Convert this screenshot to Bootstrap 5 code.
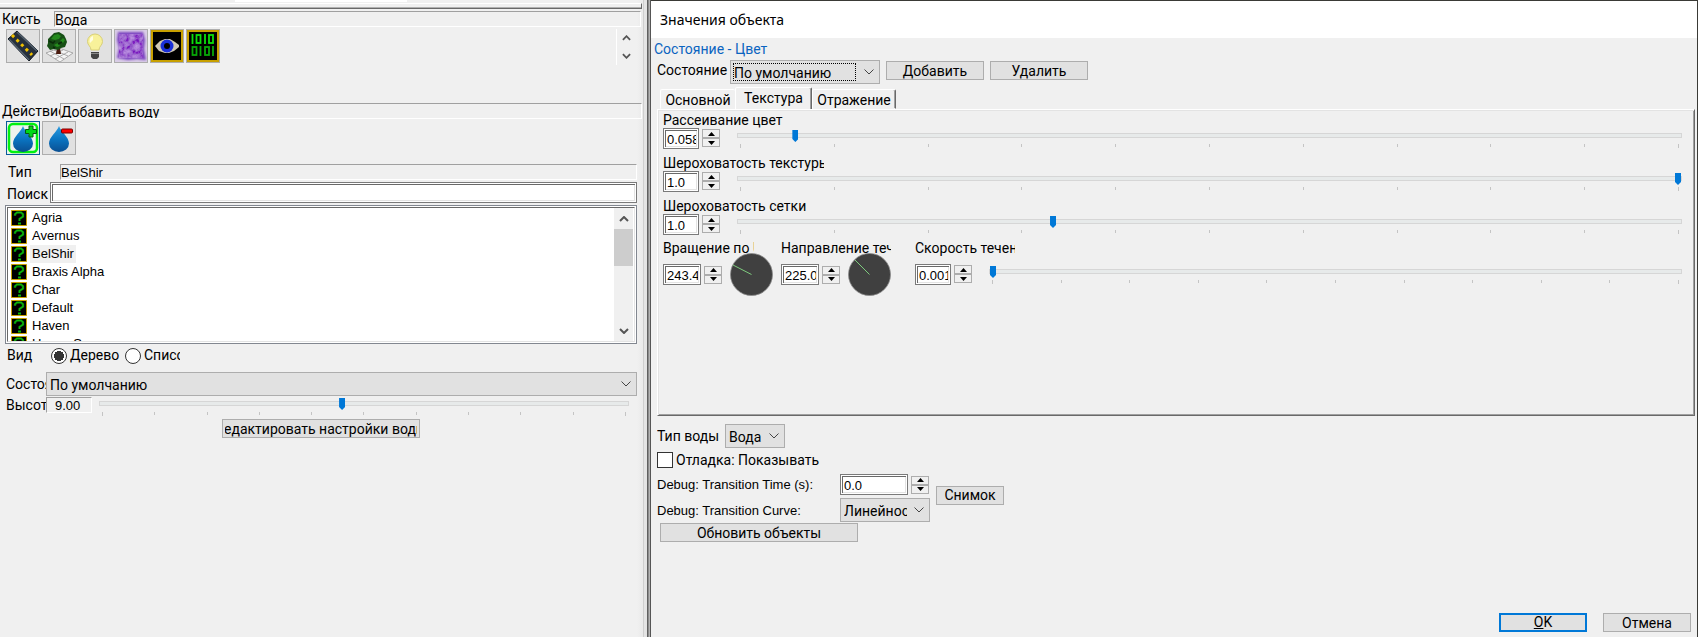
<!DOCTYPE html>
<html lang="ru">
<head>
<meta charset="utf-8">
<meta name="viewport" content="width=device-width, initial-scale=1">
<title>Значения объекта</title>
<link href="https://cdn.jsdelivr.net/npm/bootstrap@5.3.0/dist/css/bootstrap.min.css" rel="stylesheet">
<style>
:root{--face:#f0f0f0;--edge:#adadad;--btn:#e1e1e1;--blue:#0078d7}
body{background:var(--face);color:#000;font:14px/17px Roboto,"Liberation Sans",sans-serif;overflow-x:hidden}
.latin{font-family:"Liberation Sans",Arial,sans-serif;font-size:13px}
.app{display:grid;grid-template-columns:651fr 1047fr}
.dock{padding-right:1px;background:linear-gradient(to left,#555 0 1px,#b4b4b4 1px 2px,#8c8c8c 2px 3px,#606060 3px 4px,#e4e4e4 4px 7px,#cfcfcf 7px 8px,#ebebeb 8px 9px,var(--face) 14px)}
.strip{height:9px;padding-top:3px;margin-right:8px;background:linear-gradient(#fff,#fff) 235px 0/172px 2px no-repeat}
.strip div{height:6px;border:solid;border-width:1px 1px 1px 0;border-color:#fff #696969 #696969;background:linear-gradient(#f0f0f0 0 3px,#b0b0b0 3px)}
.brush-row{margin:2px 9px 0 0}
.clip{overflow:hidden;white-space:nowrap;flex:none}
.sunk{height:16px;line-height:16px;border:1px solid;border-color:#a0a0a0 #fff #fff #a0a0a0;overflow:hidden;white-space:nowrap}
.w-brush,.w-action,.w-type{height:16px}
.w-brush{width:54px;padding-left:2px}.w-action{width:60px;padding-left:2px}
.w-type{width:60px;padding-left:8px}.w-find{width:50px;height:21px;padding:4px 0 0 7px}.w-cut{width:46px;padding-left:6px}
.tile{width:34px;height:34px;padding:0;border:1px solid var(--edge);background:var(--btn);display:block}
.tile svg{display:block;width:32px;height:32px}
.tile.on{border-color:#0a5a9c;background:#e8f6e8}
.tiles{gap:2px}
.palette{height:76px;padding:2px 9px 0 6px}
.actions{padding:2px 0 9px 6px}
.pager{width:25px;height:36px;padding-right:5px;border-left:1px solid #fff}
.bare{border:0;padding:0;background:none;display:flex;align-items:center;justify-content:center}
.field{min-width:0;height:21px;padding:3px 2px 1px 3px;border:1px solid #7a7a7a;border-radius:0;background:#fff;color:#000;box-shadow:inset 0 0 0 1px #fff,inset 2px 2px #696969,inset -2px -2px #e3e3e3;line-height:17px;outline:0;flex:none}
.num{width:36px}.num-m{width:38px}.num-l{width:68px}
.spin{width:18px;margin-left:3px}
.spin button{height:9px;width:18px;border:1px solid var(--edge);background:#f0f0f0}
.spin svg{width:7px;height:4px}
.listing{height:139px;margin:2px 0 0 5px;border:1px solid #828790;padding:1px;background:#fff}
.listing>div{border:1px solid;border-color:#696969 #e3e3e3 #e3e3e3 #696969;height:135px}
.rows{padding:1px 0 0 3px;overflow:hidden}
.rows li{height:18px;display:flex;align-items:center}
.rows svg{width:16px;height:16px;margin-right:3px;flex:none}
.rows span{padding:0 2px;line-height:18px}
.rows .sel{background:#f0f0f0}
.vbar{width:20px;background:linear-gradient(to left,#fff 1px,#f0f0f0 1px);padding-right:1px}
.vbar button{height:21px;width:19px}
.vbar i{height:37px;background:#cdcdcd}
.drop{height:24px;border:1px solid var(--edge);border-radius:0;color:#000;font:inherit;appearance:none;padding:2px 22px 0 3px;min-width:0;
background:var(--btn) url("data:image/svg+xml,%3Csvg xmlns='http://www.w3.org/2000/svg' width='10' height='6'%3E%3Cpath d='M.5.5 5 5 9.500 .5' fill='none' stroke='%23444'/%3E%3C/svg%3E") right 5px center no-repeat;outline:0}
.push{height:19px;line-height:15px;border:1px solid var(--edge);background:var(--btn);color:#000;padding:1px 2px 0;display:flex;justify-content:center;align-items:center;overflow:hidden;white-space:nowrap;flex:none}
.push span{flex:none}
.w98{width:98px}.w88{width:88px}.w198{width:198px}.w68{width:68px}
.hold{overflow:hidden;display:flex;justify-content:center;width:100%}
input[type=range]{appearance:none;display:block;width:100%;height:13px;margin:0;background:none}
input[type=range]::-webkit-slider-runnable-track{height:5px;border:1px solid #d6d6d6;background:#e7eaea}
input[type=range]::-webkit-slider-thumb{appearance:none;width:6px;height:12px;margin-top:-4px;background:var(--blue);clip-path:polygon(0 0,100% 0,100% 75%,50% 100%,0 75%)}
.ticks{padding:0 3px;margin-top:2px;height:4px;display:flex;justify-content:space-between}
.ticks i{width:1px;height:3px;background:#c4c4c4}
.ticks i:first-child,.ticks i:last-child{height:4px}
.slide{padding-top:1px;margin-left:17px}
.pick{appearance:none;width:16px;height:16px;border:1px solid #333;background:#fff;margin:0;flex:none}
.pick[type=radio]{border-radius:50%}
.pick[type=radio]:checked{background:radial-gradient(circle,#333 0 5px,#fff 5px)}
.pick+label{padding-left:3px}
.view-row{height:23px;padding-left:7px}
.value{width:46px;padding-left:8px}
.height-slide{margin:0 8px 0 7px}
.dialog{border:solid #3a3a36;border-width:1px 1px 0 0}
.caption{height:37px;background:#fff;font:14px/38px "Noto Sans","Open Sans",sans-serif;padding-left:9px;margin:0}
.group-name{color:#0a64c0;font-size:14px;font-weight:400;line-height:22px;height:22px;margin:0;padding-left:3px}
.state-row{padding-left:6px}
.state-row label{width:73px;padding-top:2px}
.state-row .push{margin-top:1px}
.tabs{margin-top:3px;padding-left:9px;height:22px;align-items:flex-end}
.tabs button{height:20px;border:1px solid;border-color:#fff #696969 transparent #fff;background:var(--face);padding:0;border-radius:2px 2px 0 0;line-height:20px;box-shadow:inset -1px 0 #a0a0a0}
.tabs .first{width:75px;border-right:0;box-shadow:none}.tabs .now{width:77px;height:23px;margin-bottom:-1px;line-height:19px}.tabs .last{width:84px}
.body-pad{padding-left:6px}
.sheet{min-height:307px;gap:7px;margin-right:2px;padding:3px 12px 0 5px;border:1px solid;border-color:#fff #696969 #696969 #fff;box-shadow:inset 1px 1px #e3e3e3,inset -1px -1px #a0a0a0}
.name{height:15px;line-height:15px;width:161px;overflow-x:clip;white-space:nowrap;display:block}
.spin-top{margin-top:1px}
.dial{width:43px;height:43px;display:block;flex:none;position:relative;background:var(--face);margin-left:8px}
.short{height:11px;line-height:13px;overflow-x:clip;white-space:nowrap;display:block}
.w91{width:91px}.w110{width:110px}.w100{width:100px}
.g-turn{width:118px}.g-dir{width:134px}
.flow-row{padding-top:11px}
.lower{padding:8px 0 0 6px}
.w-debug{width:183px}
.ok{border:2px solid var(--blue);padding-top:0}
.focused{position:relative;width:150px;margin-right:6px;flex:none}
.focused::after{content:"";position:absolute;left:3px;top:3px;right:24px;bottom:3px;border:1px dotted #000;pointer-events:none}
</style>
</head>
<body>
<svg width="0" height="0" class="position-absolute" aria-hidden="true">
<defs>
<linearGradient id="water" x1="0" y1="0" x2="0" y2="1"><stop offset="0" stop-color="#2a9be0"/><stop offset=".5" stop-color="#0a75c2"/><stop offset="1" stop-color="#0a4f92"/></linearGradient>
<symbol id="q" viewBox="0 0 16 16"><path d="M.5.5h15v15H.5z" fill="#000" stroke="#c8a000"/><path d="M4 6V4.500L6 2.500h4l2 2v2L8.500 9v2M7 13.500h3" fill="none" stroke="#054d05" stroke-width="2.500"/><path d="M4 5.500V4l2-1.500h4L12 4v2.500L8.500 9v2M7 13.500h3" fill="none" stroke="#0cb80c" stroke-width="1.500"/></symbol>
<symbol id="waterdrop" viewBox="0 0 32 32"><path d="M16 4c2 6 10 11 10 17.500a10 8.500 0 0 1-20 0C6 15 14 10 16 4z" fill="url(#water)"/></symbol>
<symbol id="up" viewBox="0 0 10 6"><path d="M1 5 5 1l4 4" fill="none" stroke="#555" stroke-width="2"/></symbol>
<symbol id="down" viewBox="0 0 10 6"><path d="M1 1l4 4 4-4" fill="none" stroke="#555" stroke-width="2"/></symbol>
<symbol id="tu" viewBox="0 0 7 4"><path d="M0 4 3.500 0 7 4z"/></symbol>
<symbol id="td" viewBox="0 0 7 4"><path d="M0 0h7L3.500 4z"/></symbol>
</defs>
</svg>

<main class="app min-vh-100">
<section class="dock" aria-label="Кисть">
  <div class="strip"><div></div></div>
  <div class="d-flex brush-row">
    <div class="clip w-brush">Кисть</div><div class="sunk flex-fill">Вода</div>
  </div>
  <div class="palette d-flex justify-content-between">
    <div class="d-flex tiles">
      <button class="tile" aria-label="Дороги"><svg viewBox="0 0 32 32"><path d="M1 9 10 1l21 20-9 10z" fill="#26303c" stroke="#111820"/><path d="M2 9 22 30M10 2l20 19" stroke="#53606d" stroke-width="1.500"/><path d="M5 5l20 20" stroke="#f0c000" stroke-width="3" stroke-dasharray="3 3.500"/></svg></button>
      <button class="tile" aria-label="Объекты"><svg viewBox="0 0 32 32"><path d="M3 23 16 18l14 5-13 9zM7 21l14 8M11 20l14 6M7 26l13-6M12 29l13-7" fill="#f4f4f4" stroke="#999" stroke-width=".8"/><path d="M14 18h3l1 6h-5z" fill="#4b1c10"/><path d="M5 9l3-3 3-3 5-1 5 3 2 4 1 3-2 5-4 1-3 2-4-1-4 1-3-4 1-3z" fill="#174f15"/><path d="M8 9l3-4 4-1 3 2-2 3-4 1zM17 11l3-3 2 2-2 3zM11 15l4-2 2 3-3 1z" fill="#248a1c"/><path d="M6 11l4 2 2-2M15 14l4-2M10 17l2 1" stroke="#0a2c0a" fill="none" stroke-width="1.500"/></svg></button>
      <button class="tile" aria-label="Свет"><svg viewBox="0 0 32 32"><path d="M16 4a7.500 7.500 0 0 1 7.500 7.500c0 4-3.500 4.500-3.500 8.500h-8c0-4-3.500-4.500-3.500-8.500A7.500 7.500 0 0 1 16 4z" fill="#f8f19a" stroke="#d8cf78"/><path d="M14 6c-3 1-4 4-3 7l3-3z" fill="#fffde0"/><path d="M12 22h8v5l-2 2h-4l-2-2z" fill="#444"/><path d="M12 23.500h8" stroke="#888"/></svg></button>
      <button class="tile" aria-label="Туман"><svg viewBox="0 0 32 32"><defs><filter id="mist"><feTurbulence type="fractalNoise" baseFrequency=".2" numOctaves="4" seed="4"/><feColorMatrix values="1 0 0 0 -.05 1 0 0 0 -.3 .7 0 0 0 .35 0 0 0 0 1"/><feComposite in2="SourceGraphic" operator="in"/></filter><filter id="soft"><feGaussianBlur stdDeviation="1"/></filter></defs><path d="M0 0h32v32H0z" fill="#d9cde6"/><path d="M3 2h25l2 8-1 9 2 11-9-1-9 1-11-2 2-10-2-8z" fill="#7c44c0" filter="url(#soft)"/><path d="M4 4h24v24H4z" filter="url(#mist)" opacity=".6"/></svg></button>
      <button class="tile" aria-label="Обзор"><svg viewBox="0 0 32 32"><path d="M1 1h30v30H1z" stroke="#c8a000" stroke-width="2"/><path d="M4 16l5-5 5-2h5l5 3 4 3v2l-5 4-5 2h-4l-6-2z" fill="#d0c8b4"/><circle cx="16" cy="16" r="6.500" fill="#1a30d8"/><circle cx="16" cy="16" r="3" fill="#000"/></svg></button>
      <button class="tile" aria-label="Данные"><svg viewBox="0 0 32 32"><path d="M1 1h30v30H1z" stroke="#c8a000" stroke-width="2"/><g fill="none" stroke="#0be00b" stroke-width="1.800"><path d="M5.500 4v10M18 4v10"/><rect x="9.500" y="5" width="4" height="8"/><rect x="22" y="5" width="4" height="8"/></g><g fill="none" stroke="#07a807" stroke-width="1.800"><path d="M13.500 16v10M26 16v10"/><rect x="5.500" y="17" width="4" height="8"/><rect x="18" y="17" width="4" height="8"/></g></svg></button>
    </div>
    <div class="pager d-flex flex-column justify-content-around">
      <button class="bare" aria-label="Вверх"><svg width="9" height="6"><use href="#up"/></svg></button>
      <button class="bare" aria-label="Вниз"><svg width="9" height="6"><use href="#down"/></svg></button>
    </div>
  </div>
  <div class="d-flex me-2">
    <div class="clip w-action">Действие</div><div class="sunk flex-fill">Добавить воду</div>
  </div>
  <div class="d-flex tiles actions">
    <button class="tile on" aria-label="Добавить воду"><svg viewBox="0 0 32 32"><rect x="2" y="2" width="28" height="28" rx="4" fill="#eef3ee" stroke="#00f010" stroke-width="2.500"/><use href="#waterdrop"/><path d="M22 4h4v3.500h3.500v4H26V15h-4v-3.500h-3.500v-4H22z" fill="#00d818" stroke="#055a10"/></svg></button>
    <button class="tile" aria-label="Убрать воду"><svg viewBox="0 0 32 32"><use href="#waterdrop"/><rect x="18.500" y="7" width="11" height="4" rx="1" fill="#f00" stroke="#700"/></svg></button>
  </div>
  <div style="margin-right:13px">
    <div class="d-flex"><div class="clip w-type">Тип</div><div class="sunk latin flex-fill">BelShir</div></div>
    <div class="d-flex" style="margin-top:2px"><label class="clip w-find" for="find">Поиск</label><input id="find" class="field latin flex-fill"></div>
    <div class="listing"><div class="d-flex">
      <ul class="rows list-unstyled latin flex-fill mb-0">
        <li><svg><use href="#q"/></svg><span>Agria</span></li>
        <li><svg><use href="#q"/></svg><span>Avernus</span></li>
        <li><svg><use href="#q"/></svg><span class="sel">BelShir</span></li>
        <li><svg><use href="#q"/></svg><span>Braxis Alpha</span></li>
        <li><svg><use href="#q"/></svg><span>Char</span></li>
        <li><svg><use href="#q"/></svg><span>Default</span></li>
        <li><svg><use href="#q"/></svg><span>Haven</span></li>
        <li><svg><use href="#q"/></svg><span>Haven Sun</span></li>
      </ul>
      <div class="vbar d-flex flex-column">
        <button class="bare" aria-label="Прокрутить вверх"><svg width="10" height="6"><use href="#up"/></svg></button>
        <i></i>
        <button class="bare mt-auto" aria-label="Прокрутить вниз"><svg width="10" height="6"><use href="#down"/></svg></button>
      </div>
    </div></div>
    <div class="d-flex align-items-center view-row">
      <div class="clip" style="width:44px">Вид</div>
      <input class="pick" type="radio" name="view" id="tree" checked><label class="clip" for="tree" style="width:58px">Дерево</label>
      <input class="pick" type="radio" name="view" id="flat"><label class="clip" for="flat" style="width:39px">Список</label>
    </div>
    <div class="d-flex align-items-center" style="margin-top:5px"><label class="clip w-cut" for="st">Состояние</label><select id="st" class="drop flex-fill"><option>По умолчанию</option></select></div>
    <div class="d-flex" style="padding-top:1px">
      <label class="clip w-cut" for="hgt">Высота</label><div class="sunk value latin">9.00</div>
      <div class="flex-fill height-slide"><input type="range" id="hgt" min="0" max="1000" value="458"><div class="ticks"><i></i><i></i><i></i><i></i><i></i><i></i><i></i><i></i><i></i><i></i><i></i></div></div>
    </div>
    <div class="d-flex justify-content-center" style="padding:3px 0 0 5px"><button class="push w198"><span class="hold"><span>Редактировать настройки воды</span></span></button></div>
  </div>
</section>

<section class="dialog d-flex flex-column" aria-label="Значения объекта">
  <h1 class="caption">Значения объекта</h1>
  <h2 class="group-name">Состояние - Цвет</h2>
  <div class="d-flex align-items-start state-row">
    <label for="state" class="clip">Состояние</label>
    <div class="focused"><select id="state" class="drop w-100"><option>По умолчанию</option></select></div>
    <button class="push w98" style="margin-right:6px">Добавить</button>
    <button class="push w98">Удалить</button>
  </div>
  <div class="tabs d-flex" role="tablist">
    <button class="first" role="tab">Основной</button><button class="now" role="tab" aria-selected="true">Текстура</button><button class="last" role="tab">Отражение</button>
  </div>
  <div class="body-pad">
  <div class="sheet d-flex flex-column">
    <div>
      <label class="name" for="diff">Рассеивание цвет</label>
      <div class="d-flex align-items-start">
        <input class="field num latin" id="diff" value="0.058">
        <div class="spin spin-top"><button class="bare" aria-label="Больше"><svg><use href="#tu"/></svg></button><button class="bare" aria-label="Меньше"><svg><use href="#td"/></svg></button></div>
        <div class="slide flex-fill"><input type="range" min="0" max="1000" value="58" aria-label="Рассеивание цвет"><div class="ticks"><i></i><i></i><i></i><i></i><i></i><i></i><i></i><i></i><i></i><i></i><i></i></div></div>
      </div>
    </div>
    <div>
      <label class="name" for="rtex">Шероховатость текстуры</label>
      <div class="d-flex align-items-start">
        <input class="field num latin" id="rtex" value="1.0">
        <div class="spin spin-top"><button class="bare" aria-label="Больше"><svg><use href="#tu"/></svg></button><button class="bare" aria-label="Меньше"><svg><use href="#td"/></svg></button></div>
        <div class="slide flex-fill"><input type="range" min="0" max="1000" value="1000" aria-label="Шероховатость текстуры"><div class="ticks"><i></i><i></i><i></i><i></i><i></i><i></i><i></i><i></i><i></i><i></i><i></i></div></div>
      </div>
    </div>
    <div>
      <label class="name" for="rmesh">Шероховатость сетки</label>
      <div class="d-flex align-items-start">
        <input class="field num latin" id="rmesh" value="1.0">
        <div class="spin spin-top"><button class="bare" aria-label="Больше"><svg><use href="#tu"/></svg></button><button class="bare" aria-label="Меньше"><svg><use href="#td"/></svg></button></div>
        <div class="slide flex-fill"><input type="range" min="0" max="1000" value="333" aria-label="Шероховатость сетки"><div class="ticks"><i></i><i></i><i></i><i></i><i></i><i></i><i></i><i></i><i></i><i></i><i></i></div></div>
      </div>
    </div>
    <div class="d-flex">
      <div class="g-turn flex-shrink-0">
        <label class="short w91" for="turn">Вращение по UV</label>
        <div class="d-flex align-items-center">
          <input class="field num-m latin" id="turn" value="243.4">
          <div class="spin"><button class="bare" aria-label="Больше"><svg><use href="#tu"/></svg></button><button class="bare" aria-label="Меньше"><svg><use href="#td"/></svg></button></div>
          <svg class="dial" viewBox="0 0 43 43"><circle cx="21.500" cy="21.500" r="21" fill="#404040" stroke="#8a8a8a" stroke-width=".8"/><path d="M21.500 21.500 3 12" stroke="#7ecb7e"/></svg>
        </div>
      </div>
      <div class="g-dir flex-shrink-0">
        <label class="short w110" for="dir">Направление течения</label>
        <div class="d-flex align-items-center">
          <input class="field num-m latin" id="dir" value="225.0">
          <div class="spin"><button class="bare" aria-label="Больше"><svg><use href="#tu"/></svg></button><button class="bare" aria-label="Меньше"><svg><use href="#td"/></svg></button></div>
          <svg class="dial" viewBox="0 0 43 43"><circle cx="21.500" cy="21.500" r="21" fill="#404040" stroke="#8a8a8a" stroke-width=".8"/><path d="M21.500 21.500 7 7" stroke="#7ecb7e"/></svg>
        </div>
      </div>
      <div class="flex-fill">
        <label class="short w100" for="flow">Скорость течения</label>
        <div class="d-flex align-items-start flow-row">
          <input class="field num latin" id="flow" value="0.001">
          <div class="spin spin-top"><button class="bare" aria-label="Больше"><svg><use href="#tu"/></svg></button><button class="bare" aria-label="Меньше"><svg><use href="#td"/></svg></button></div>
          <div class="slide flex-fill"><input type="range" min="0" max="1000" value="0" aria-label="Скорость течения"><div class="ticks"><i></i><i></i><i></i><i></i><i></i><i></i><i></i><i></i><i></i><i></i><i></i></div></div>
        </div>
      </div>
    </div>
  </div>
  </div>
  <div class="lower">
    <div class="d-flex align-items-center"><label for="kind" class="clip" style="width:68px">Тип воды</label><select id="kind" class="drop" style="width:60px"><option>Вода</option></select></div>
    <div class="d-flex align-items-center" style="margin-top:4px;height:16px"><input class="pick" type="checkbox" id="dbg"><label for="dbg">Отладка: Показывать</label></div>
    <div class="d-flex align-items-center">
      <div>
        <div class="d-flex align-items-center" style="margin-top:6px"><label for="tt" class="clip latin w-debug">Debug: Transition Time (s):</label><input id="tt" class="field num-l latin" value="0.0"><div class="spin"><button class="bare" aria-label="Больше"><svg><use href="#tu"/></svg></button><button class="bare" aria-label="Меньше"><svg><use href="#td"/></svg></button></div></div>
        <div class="d-flex align-items-center" style="margin-top:3px"><label for="tc" class="clip latin w-debug">Debug: Transition Curve:</label><select id="tc" class="drop" style="width:90px"><option>Линейность</option></select></div>
      </div>
      <button class="push w68" style="margin-left:6px">Снимок</button>
    </div>
    <button class="push w198" style="margin:1px 0 0 3px">Обновить объекты</button>
  </div>
  <div class="d-flex justify-content-end gap-3 mt-auto" style="padding:0 6px 5px">
    <button class="push w88 ok"><u>O</u>K</button><button class="push w88">Отмена</button>
  </div>
</section>
</main>
<script src="https://cdn.jsdelivr.net/npm/bootstrap@5.3.0/dist/js/bootstrap.bundle.min.js"></script>
</body>
</html>
